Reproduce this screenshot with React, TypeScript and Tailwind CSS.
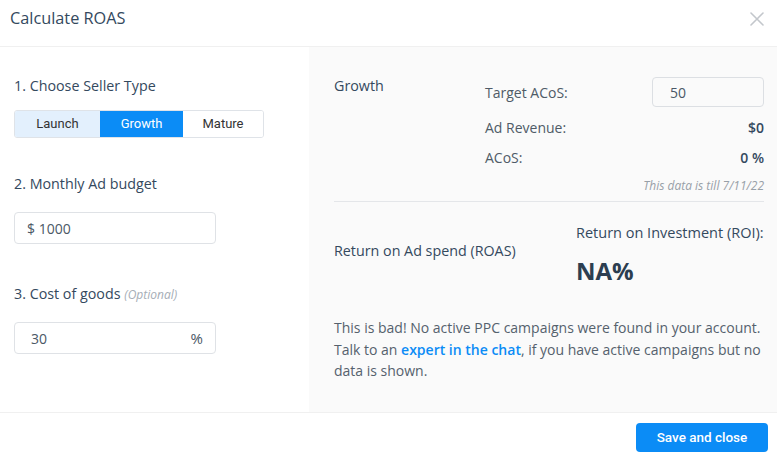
import React from "react";

export default function App() {
  const sans = { fontFamily: '"Open Sans", "Noto Sans", sans-serif' };
  return (
    <div className="w-[777px] h-[456px] bg-white flex flex-col overflow-hidden text-[#34495e]" style={sans}>
      {/* Header */}
      <div className="h-[47px] shrink-0 border-b border-[#f0f0f0] flex items-start justify-between pl-[10px] pr-[13px]">
        <div className="text-[16.3px] leading-[22px] mt-[7px] text-[#34495e]">Calculate ROAS</div>
        <svg width="14" height="14" viewBox="0 0 14 14" className="mt-[12px]">
          <path d="M1 1 L13 13 M13 1 L1 13" stroke="#c3c7cc" strokeWidth="1.6" strokeLinecap="round" />
        </svg>
      </div>

      {/* Body */}
      <div className="flex h-[366px] border-b border-[#f0f0f0]">
        {/* Left */}
        <div className="w-[309px] shrink-0 bg-white pl-[14px] pt-[30px] flex flex-col">
          <div className="text-[14.3px] leading-[18px]">1. Choose Seller Type</div>
          <div className="mt-[15px] flex h-[28px] w-[250px] rounded-[3px] overflow-hidden border border-[#dfe3e8] text-[13px]" style={{ fontFamily: 'Roboto, "Liberation Sans", sans-serif' }}>
            <div className="w-[85px] bg-[#e3f0fd] flex items-center justify-center text-[#333]">Launch</div>
            <div className="w-[83px] bg-[#0b8cf6] flex items-center justify-center text-white">Growth</div>
            <div className="flex-1 bg-white flex items-center justify-center text-[#333]">Mature</div>
          </div>
          <div className="mt-[37px] text-[14.3px] leading-[18px]">2. Monthly Ad budget</div>
          <div className="mt-[19px] h-[32px] w-[202px] border border-[#dfe2e6] rounded-[4px] flex items-center pl-[12px] text-[14px] text-[#4b5866]">
            $ 1000
          </div>
          <div className="mt-[41px] text-[14.3px] leading-[18px]">
            3. Cost of goods <span className="italic text-[12px] text-[#a5adb6]">(Optional)</span>
          </div>
          <div className="mt-[18px] h-[32px] w-[202px] border border-[#dfe2e6] rounded-[4px] flex items-center justify-between pl-[16px] pr-[12px] text-[14px] text-[#4b5866]">
            <span>30</span>
            <span className="text-[15px]">%</span>
          </div>
        </div>

        {/* Right */}
        <div className="flex-1 bg-[#fafafa] pl-[25px] pr-[13px] pt-[30px] flex flex-col">
          <div className="flex">
            <div className="w-[151px] shrink-0 text-[14.3px] leading-[18px]">Growth</div>
            <div className="flex-1 flex flex-col text-[14px] text-[#4f5b67]">
              <div className="flex items-center justify-between h-[30px]">
                <span>Target ACoS:</span>
                <div className="w-[112px] h-[30px] border border-[#dcdfe3] rounded-[4px] bg-[#fafafa] flex items-center pl-[17px] text-[#4b5866]">50</div>
              </div>
              <div className="mt-[12px] flex items-center justify-between leading-[18px]">
                <span>Ad Revenue:</span>
                <span className="font-semibold text-[#34495e]">$0</span>
              </div>
              <div className="mt-[12px] flex items-center justify-between leading-[18px]">
                <span>ACoS:</span>
                <span className="font-semibold text-[#34495e]">0 %</span>
              </div>
              <div className="mt-[11px] text-right italic text-[12px] leading-[16px] text-[#98a0a8]">This data is till 7/11/22</div>
            </div>
          </div>
          <div className="mt-[7px] border-t border-[#e4e6e9]" />
          <div className="flex mt-[22px]">
            <div className="w-[242px] shrink-0 pt-[18px] text-[14.3px] leading-[18px]">Return on Ad spend (ROAS)</div>
            <div className="flex flex-col">
              <div className="text-[14.5px] leading-[18px]">Return on Investment (ROI):</div>
              <div className="mt-[13px] text-[24px] leading-[32px] font-bold text-[#2c3e50]">NA%</div>
            </div>
          </div>
          <div className="mt-[30px] text-[14px] leading-[21.5px] text-[#55616d]">
            This is bad! No active PPC campaigns were found in your account. Talk to an{" "}
            <span className="font-semibold text-[#0b8cf6]">expert in the chat</span>, if you have active campaigns but no data is shown.
          </div>
        </div>
      </div>

      {/* Footer */}
      <div className="flex justify-end pr-[9px] pt-[10px]">
        <button className="h-[29px] w-[132px] rounded-[4px] bg-[#0b8cf6] text-white text-[13.5px] font-medium" style={{ fontFamily: 'Roboto, "Liberation Sans", sans-serif' }}>
          Save and close
        </button>
      </div>
    </div>
  );
}
